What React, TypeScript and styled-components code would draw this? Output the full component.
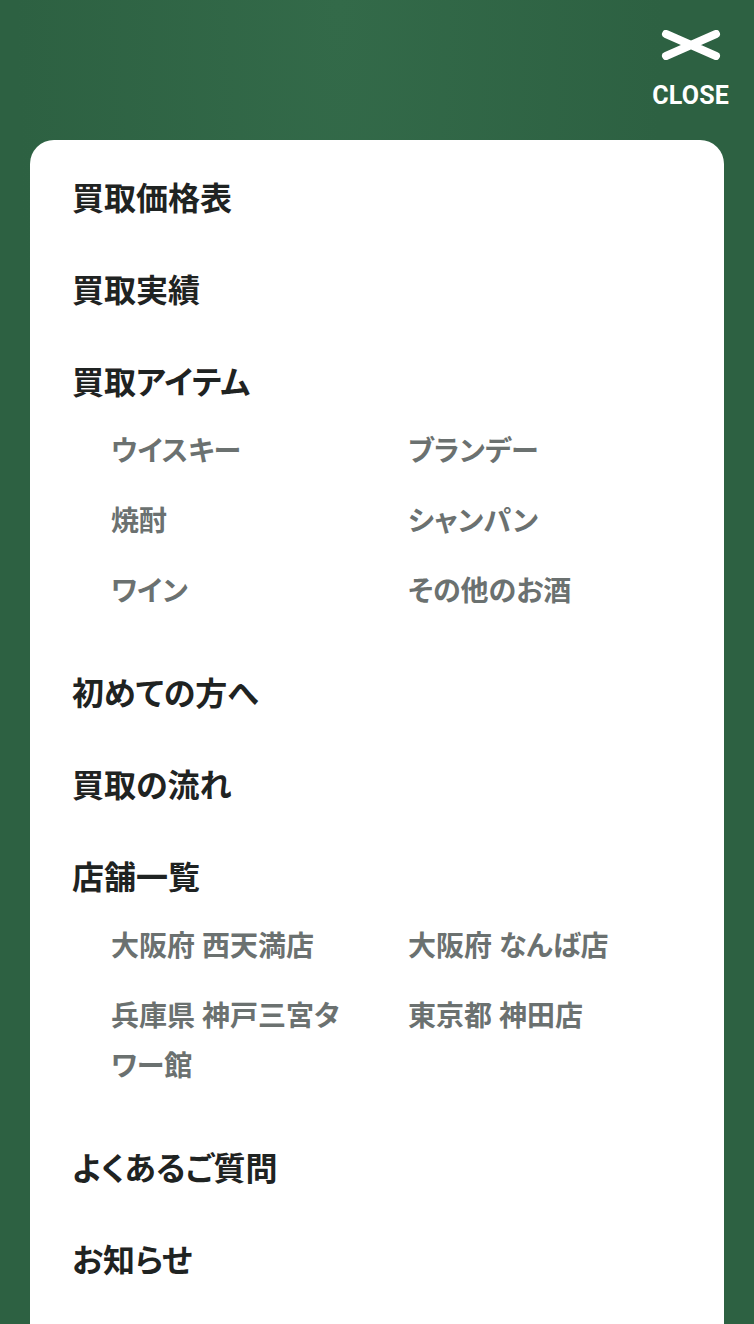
import React, { FC } from 'react';
import styled, { createGlobalStyle } from 'styled-components';

interface IMenuItem {
  label: string;
  children?: string[];
}

const menu: IMenuItem[] = [
  { label: '買取価格表' },
  { label: '買取実績' },
  {
    label: '買取アイテム',
    children: ['ウイスキー', 'ブランデー', '焼酎', 'シャンパン', 'ワイン', 'その他のお酒'],
  },
  { label: '初めての方へ' },
  { label: '買取の流れ' },
  {
    label: '店舗一覧',
    children: ['大阪府 西天満店', '大阪府 なんば店', '兵庫県 神戸三宮タワー館', '東京都 神田店'],
  },
  { label: 'よくあるご質問' },
  { label: 'お知らせ' },
];

const GlobalStyle = createGlobalStyle`
  html, body {
    margin: 0;
    padding: 0;
    background: #2d6142;
    overflow: hidden;
  }
  * {
    box-sizing: border-box;
  }
`;

const Screen = styled.div`
  min-height: 1324px;
  background: radial-gradient(ellipse at 45% 0%, #336a49 0%, #2d6142 55%);
  font-family: Roboto, 'Noto Sans CJK JP', sans-serif;
  padding: 0 30px;
`;

const Header = styled.header`
  height: 140px;
  display: flex;
  justify-content: flex-end;
  align-items: flex-start;
  padding-top: 30px;
  margin-right: -5px;
`;

const CloseButton = styled.button`
  display: flex;
  flex-direction: column;
  align-items: center;
  gap: 23px;
  background: none;
  border: none;
  padding: 0;
  color: #ffffff;
  cursor: pointer;
  font-family: Roboto, 'Liberation Sans', sans-serif;
  font-weight: 700;
  font-size: 25px;
  line-height: 26px;
  letter-spacing: 0.2px;
`;

const Card = styled.nav`
  background: #ffffff;
  border-radius: 24px 24px 0 0;
  padding: 10px 42px 120px;
`;

const List = styled.ul`
  list-style: none;
  margin: 0;
  padding: 0;
`;

const Item = styled.li`
  padding: 23px 0;
`;

const Heading = styled.a`
  display: block;
  font-family: 'Noto Sans CJK JP', sans-serif;
  font-feature-settings: 'palt';
  font-weight: 700;
  font-size: 32px;
  line-height: 46px;
  color: #1f2322;
  text-decoration: none;
`;

const SubList = styled.ul`
  list-style: none;
  margin: 24px 0 5px;
  padding: 0 0 0 39px;
  display: grid;
  grid-template-columns: 240px 240px;
  column-gap: 57px;
  row-gap: 20px;
`;

const SubItem = styled.li`
  font-family: Roboto, 'Noto Sans CJK JP', sans-serif;
  font-feature-settings: 'palt';
  font-weight: 700;
  font-size: 28px;
  line-height: 50px;
  color: #6b7170;
`;

const CloseIcon: FC = () => (
  <svg width="60" height="30" viewBox="0 0 60 30" fill="none">
    <path
      d="M5 4 L55 26 M5 26 L55 4"
      stroke="#ffffff"
      strokeWidth="8"
      strokeLinecap="round"
    />
  </svg>
);

const App: FC = () => (
  <>
    <GlobalStyle />
    <Screen>
      <Header>
        <CloseButton>
          <CloseIcon />
          CLOSE
        </CloseButton>
      </Header>
      <Card>
        <List>
          {menu.map((item) => (
            <Item key={item.label}>
              <Heading>{item.label}</Heading>
              {item.children && (
                <SubList>
                  {item.children.map((child) => (
                    <SubItem key={child}>{child}</SubItem>
                  ))}
                </SubList>
              )}
            </Item>
          ))}
        </List>
      </Card>
    </Screen>
  </>
);

export default App;
